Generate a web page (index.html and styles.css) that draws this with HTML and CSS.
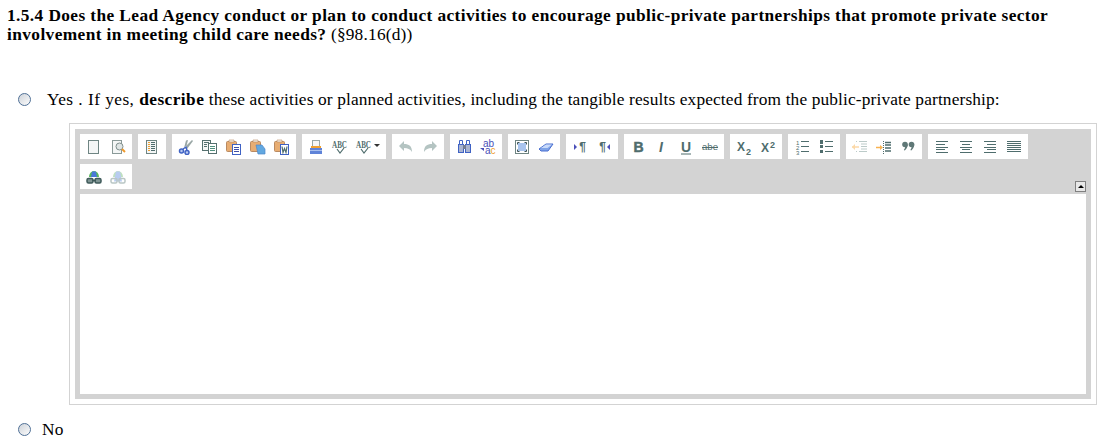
FILE: index.html
```html
<!DOCTYPE html>
<html lang="en">

<head>
    <meta charset="UTF-8">
    <meta name="viewport" content="width=device-width, initial-scale=1.0">
    <title>1.5.4</title>
    <link rel="stylesheet" href="styles.css">
</head>

<body>
    <svg class="defs" width="0" height="0">
        <symbol id="i-new" viewBox="0 0 16 16"><rect x="2.5" y="1.5" width="10" height="13" fill="#f4f6f6" stroke="#6f8583"/></symbol>
        <symbol id="i-preview" viewBox="0 0 16 16"><rect x="2.5" y="1.5" width="9" height="13" fill="#f4f6f6" stroke="#8a9a98"/><circle cx="9.5" cy="7.5" r="3.5" fill="#dfe5e5" stroke="#7f8f8d"/><path d="M12 10l3 3" stroke="#ef9a2d" stroke-width="2"/></symbol>
        <symbol id="i-templates" viewBox="0 0 16 16"><rect x="2.5" y="1.5" width="10" height="13" fill="#f4f6f6" stroke="#6f8583"/><path d="M4 3.500h2M4 5.500h2M4 7.500h2M4 9.500h2M4 11.500h2" stroke="#f0a030"/><path d="M7 3.500h4M7 5.500h4M7 7.500h4M7 9.500h4M7 11.500h4" stroke="#4f6d6d"/></symbol>
        <symbol id="i-cut" viewBox="0 0 16 16"><path d="M6 9L14 1l1 1-6 8zM8 9l2-8-2 .5L6 9z" fill="#9aa7a6"/><circle cx="3.500" cy="12" r="2" fill="#b8c8f0" stroke="#3f62c4" stroke-width="1.500"/><circle cx="9" cy="13.500" r="2" fill="#b8c8f0" stroke="#3f62c4" stroke-width="1.500"/><path d="M5 10l3-2 1 3.500" fill="none" stroke="#3f62c4" stroke-width="1.400"/></symbol>
        <symbol id="i-copy" viewBox="0 0 16 16"><rect x=".5" y="1.5" width="8" height="10" fill="#f4f6f6" stroke="#55706f"/><path d="M2 3.500h5M2 5.500h3M2 7.500h3" stroke="#55706f"/><rect x="6.500" y="4.500" width="8" height="10" fill="#fff" stroke="#55706f"/><path d="M8 7.500h5M8 9.500h5M8 11.500h5" stroke="#4f8f7d"/></symbol>
        <symbol id="i-paste" viewBox="0 0 16 16"><rect x=".5" y="2.500" width="10" height="10" rx="1" fill="#e8ad72" stroke="#b98a62"/><path d="M3 1h5v2H3z" fill="#f7efe6" stroke="#b98a62" stroke-width=".6"/><rect x="6.500" y="5.500" width="8" height="10" fill="#fff" stroke="#3f62c4"/><path d="M8 8.500h5M8 10.500h5M8 12.500h5" stroke="#3f4fa8"/></symbol>
        <symbol id="i-pastetext" viewBox="0 0 16 16"><rect x=".5" y="2.500" width="10" height="10" rx="1" fill="#e8ad72" stroke="#b98a62"/><path d="M3 1h5v2H3z" fill="#f7efe6" stroke="#b98a62" stroke-width=".6"/><path d="M6 6h6l3 4v5H8z" fill="#62a8e0" stroke="#4f86c8" stroke-width=".7"/></symbol>
        <symbol id="i-pasteword" viewBox="0 0 16 16"><rect x=".5" y="2.500" width="10" height="10" rx="1" fill="#e8ad72" stroke="#b98a62"/><path d="M3 1h5v2H3z" fill="#f7efe6" stroke="#b98a62" stroke-width=".6"/><rect x="6.500" y="5.500" width="8" height="10" fill="#fff" stroke="#3f62c4"/><path d="M8 7.500l1 6 1.500-4 1.500 4 1-6" fill="none" stroke="#4f6d6d" stroke-width="1.200"/></symbol>
        <symbol id="i-print" viewBox="0 0 16 16"><rect x="4.500" y="1.500" width="7" height="6" fill="#f6f6f6" stroke="#9aa7a6"/><rect x="3" y="7" width="10" height="2" fill="#f0a030"/><rect x="2" y="9" width="12" height="6" fill="#5f83d8"/><path d="M2 11.500h12" stroke="#a9c0ee"/></symbol>
        <symbol id="i-undo" viewBox="0 0 16 16"><path d="M1 7l5-5v3c5 0 8 2 8 8-2-3-4-4-8-4v3z" fill="#b4c4c2"/></symbol>
        <symbol id="i-redo" viewBox="0 0 16 16"><path d="M15 7l-5-5v3c-5 0-8 2-8 8 2-3 4-4 8-4v3z" fill="#b4c4c2"/></symbol>
        <symbol id="i-find" viewBox="0 0 16 16"><rect x="2.500" y="5.500" width="5" height="8" fill="#a9b4d0" stroke="#3f62c4"/><rect x="9.500" y="5.500" width="5" height="8" fill="#a9b4d0" stroke="#3f62c4"/><path d="M3.500 1.500h3v4h-3zM10.500 1.500h3v4h-3z" fill="#fff" stroke="#3f62c4"/><rect x="7" y="6" width="3" height="4" fill="#737d94"/></symbol>
        <symbol id="i-max" viewBox="0 0 16 16"><rect x="1.500" y="1.500" width="13" height="13" fill="#fff" stroke="#6f8583"/><rect x="4" y="4" width="8" height="8" fill="#a9c4ee"/><path d="M3.500 5.500v-2h2M10.500 3.500h2v2M12.500 10.500v2h-2M5.500 12.500h-2v-2" fill="none" stroke="#3f5555"/></symbol>
        <symbol id="i-erase" viewBox="0 0 16 16"><path d="M1 10l7-5h7l-5 7H3z" fill="#7fa4e8" stroke="#4a6fd0"/><path d="M8 5.500h6l-4.500 3.500H3z" fill="#c8dafa"/></symbol>
        <symbol id="i-ul" viewBox="0 0 16 16"><path d="M2 1h3v4H2zM2 6h3v3H2zM2 11h3v3H2z" fill="#4f6d6d"/><path d="M7 2.500h8M7 7.500h8M7 12.500h8" stroke="#4f6d6d"/></symbol>
        <symbol id="i-outdent" viewBox="0 0 16 16"><path d="M4 2.500h2M4 12.500h2" stroke="#bccbc9" stroke-dasharray="1 1"/><path d="M7 2.500h8M9 5h6M9 7.500h6M9 10h6M7 12.500h8" stroke="#bccbc9"/><path d="M0 8h7" stroke="#fcd9a8" stroke-width="1.500"/><path d="M3 5L0 8l3 3z" fill="#fcd9a8"/></symbol>
        <symbol id="i-indent" viewBox="0 0 16 16"><path d="M7.500 2v13" stroke="#4f6d6d" stroke-dasharray="1 1"/><path d="M9 3.500h6M9 6h6M9 9h6M9 12h6" stroke="#4f6d6d" stroke-width="1.300"/><path d="M0 8.500h5" stroke="#f8b250" stroke-width="1.500"/><path d="M4 6l3 2.500L4 11z" fill="#f8b250"/></symbol>
        <symbol id="i-quote" viewBox="0 0 16 16"><circle cx="5" cy="5.500" r="2.800" fill="#5f7877"/><path d="M7.800 5.500c0 3-2 5-3 6l-1-.5c1-1.500 1.500-2.500 1.500-4.500z" fill="#5f7877"/><circle cx="11.500" cy="5.500" r="2.800" fill="#5f7877"/><path d="M14.300 5.500c0 3-2 5-3 6l-1-.5c1-1.500 1.500-2.500 1.500-4.500z" fill="#5f7877"/></symbol>
        <symbol id="i-left" viewBox="0 0 16 16"><path d="M2 2.500h12M2 5.500h9M2 8.500h12M2 10.500h9M2 13.500h12" stroke="#4f6d6d"/></symbol>
        <symbol id="i-center" viewBox="0 0 16 16"><path d="M2 2.500h12M4 5.500h8M2 8.500h12M4 10.500h8M2 13.500h12" stroke="#4f6d6d"/></symbol>
        <symbol id="i-right" viewBox="0 0 16 16"><path d="M2 2.500h12M5 5.500h9M2 8.500h12M5 10.500h9M2 13.500h12" stroke="#4f6d6d"/></symbol>
        <symbol id="i-just" viewBox="0 0 16 16"><path d="M1 2.500h14M1 4.500h14M1 6.500h14M1 8.500h14M1 10.500h14M1 12.500h14" stroke="#4f6d6d"/></symbol>
        <symbol id="i-link" viewBox="0 0 16 16"><path d="M3 8a5 6 0 0 1 10 0z" fill="#57b85a"/><path d="M6 2.500h4l1 5.500H5z" fill="#4a78d8"/><rect x="1" y="9.500" width="6" height="4.500" rx="1.500" fill="#7f9493" stroke="#3f5a5a" stroke-width="1.500"/><rect x="9" y="9.500" width="6" height="4.500" rx="1.500" fill="#7f9493" stroke="#3f5a5a" stroke-width="1.500"/><path d="M6 11.500h4" stroke="#3f5a5a" stroke-width="1.500"/></symbol>
        <symbol id="i-unlink" viewBox="0 0 16 16"><path d="M3 8a5 6 0 0 1 10 0z" fill="#bfe0c0"/><path d="M6 2.500h4l2 10H4z" fill="#b8ccf0"/><rect x="1" y="9.500" width="6" height="4.500" rx="1.500" fill="none" stroke="#b9c6c5" stroke-width="1.500"/><rect x="9" y="9.500" width="6" height="4.500" rx="1.500" fill="none" stroke="#b9c6c5" stroke-width="1.500"/></symbol>
    </svg>

    <p class="question"><b>1.5.4 Does the Lead Agency conduct or plan to conduct activities to encourage public-private partnerships that promote private sector involvement in meeting child care needs?</b> (§98.16(d))</p>

    <label class="opt opt-yes">
        <input type="radio" name="q154">
        <span><span class="lead">Yes . If yes, <b>describe</b></span> these activities or planned activities, including the tangible results expected from the public-private partnership:</span>
    </label>

    <div class="editor">
        <div class="toolbar">
            <div class="row">
                <div class="group"><a class="btn"><svg><use href="#i-new"/></svg></a><a class="btn"><svg><use href="#i-preview"/></svg></a></div>
                <div class="group"><a class="btn"><svg><use href="#i-templates"/></svg></a></div>
                <div class="group"><a class="btn"><svg><use href="#i-cut"/></svg></a><a class="btn"><svg><use href="#i-copy"/></svg></a><a class="btn"><svg><use href="#i-paste"/></svg></a><a class="btn"><svg><use href="#i-pastetext"/></svg></a><a class="btn"><svg><use href="#i-pasteword"/></svg></a></div>
                <div class="group">
                    <a class="btn"><svg><use href="#i-print"/></svg></a>
                    <a class="btn"><svg viewBox="0 0 16 16"><text x="0" y="9" class="abc" textLength="15" lengthAdjust="spacingAndGlyphs">ABC</text><path d="M5 10l3 4 4-5" fill="none" stroke="#4f6d6d" stroke-width="1.200"/></svg></a>
                    <a class="btn btn-menu"><svg viewBox="0 0 16 16"><text x="0" y="9" class="abc" textLength="15" lengthAdjust="spacingAndGlyphs">ABC</text><path d="M5 10l3 4 4-5" fill="none" stroke="#4f6d6d" stroke-width="1.200"/></svg><i class="caret"></i></a>
                </div>
                <div class="group"><a class="btn"><svg><use href="#i-undo"/></svg></a><a class="btn"><svg><use href="#i-redo"/></svg></a></div>
                <div class="group">
                    <a class="btn"><svg><use href="#i-find"/></svg></a>
                    <a class="btn"><svg viewBox="0 0 16 16"><text x="3" y="7.500" class="rep">ab</text><text x="5" y="14.500" class="rep">a<tspan class="rep-c">c</tspan></text><path d="M0 9h4v3z" fill="#4a4fb8"/></svg></a>
                </div>
                <div class="group"><a class="btn"><svg><use href="#i-max"/></svg></a><a class="btn"><svg><use href="#i-erase"/></svg></a></div>
                <div class="group">
                    <a class="btn"><svg viewBox="0 0 16 16"><path d="M2 5l3 3-3 3z" fill="#4a4fb8"/><text x="14" y="12" class="para">¶</text></svg></a>
                    <a class="btn"><svg viewBox="0 0 16 16"><text x="10" y="12" class="para">¶</text><path d="M14 5l-3 3 3 3z" fill="#4a4fb8"/></svg></a>
                </div>
                <div class="group">
                    <a class="btn"><svg viewBox="0 0 16 16"><text x="8.500" y="13" class="fmt b heavy">B</text></svg></a>
                    <a class="btn"><svg viewBox="0 0 16 16"><text x="7" y="13" class="fmt it">I</text></svg></a>
                    <a class="btn"><svg viewBox="0 0 16 16"><text x="8" y="13" class="fmt b">U</text><path d="M3 15h10" stroke="#4f6d6d"/></svg></a>
                    <a class="btn"><svg viewBox="0 0 16 16"><text x="0" y="11" class="strike" textLength="16" lengthAdjust="spacingAndGlyphs">abe</text><path d="M0 8.500h16" stroke="#4f6d6d"/></svg></a>
                </div>
                <div class="group">
                    <a class="btn"><svg viewBox="0 0 16 16"><text x="1" y="12" class="sx">X</text><text x="10" y="16" class="ss">2</text></svg></a>
                    <a class="btn"><svg viewBox="0 0 16 16"><text x="1" y="13" class="sx">X</text><text x="10" y="9" class="ss">2</text></svg></a>
                </div>
                <div class="group">
                    <a class="btn"><svg viewBox="0 0 16 16"><text x="2" y="6" class="num">1</text><text x="2" y="11" class="num">2</text><text x="2" y="16" class="num">3</text><path d="M7 2.500h8M7 7.500h8M7 12.500h8" stroke="#4f6d6d"/></svg></a>
                    <a class="btn"><svg><use href="#i-ul"/></svg></a>
                </div>
                <div class="group"><a class="btn"><svg><use href="#i-outdent"/></svg></a><a class="btn"><svg><use href="#i-indent"/></svg></a><a class="btn"><svg><use href="#i-quote"/></svg></a></div>
                <div class="group"><a class="btn"><svg><use href="#i-left"/></svg></a><a class="btn"><svg><use href="#i-center"/></svg></a><a class="btn"><svg><use href="#i-right"/></svg></a><a class="btn"><svg><use href="#i-just"/></svg></a></div>
            </div>
            <div class="row">
                <div class="group"><a class="btn"><svg><use href="#i-link"/></svg></a><a class="btn"><svg><use href="#i-unlink"/></svg></a></div>
            </div>
            <a class="collapse"><i></i></a>
        </div>
        <div class="area"></div>
    </div>

    <label class="opt opt-no">
        <input type="radio" name="q154">
        <span>No</span>
    </label>
</body>

</html>
```

FILE: styles.css
```css
body {
    margin: 0;
    padding: 6px 0 0 7px;
    font-family: "Liberation Serif", "Times New Roman", serif;
    font-size: 17.33px;
    line-height: 19px;
    color: #000;
    background-color: #fff;
    overflow: hidden;
}

.defs {
    position: absolute;
}

.question {
    margin: 0;
    width: 1060px;
    letter-spacing: 0.2px;
}

.question b {
    letter-spacing: 0.4px;
}

.opt {
    display: flex;
    align-items: center;
    letter-spacing: 0.14px;
}

.lead {
    letter-spacing: 0.45px;
}

.opt input {
    appearance: none;
    flex: none;
    width: 13px;
    height: 13px;
    margin: 0;
    border: 1px solid #4f7096;
    border-radius: 50%;
    background: linear-gradient(135deg, #cfd4da, #fbfbfb);
}

.opt-yes {
    margin: 46px 0 0 11px;
    gap: 16px;
}

.opt-no {
    margin: 15px 0 0 11px;
    gap: 11px;
}

.editor {
    width: 1016px;
    margin: 14px 0 0 62px;
    padding: 5px;
    border: 1px solid #d3d3d3;
}

.toolbar {
    position: relative;
    display: flex;
    flex-direction: column;
    gap: 5px;
    padding: 5px;
    background-color: #d3d3d3;
}

.row {
    display: flex;
    gap: 6px;
}

.group {
    display: flex;
    padding: 0 2px;
    background-color: #fff;
}

.btn {
    display: flex;
    width: 24px;
    height: 25px;
    padding: 5px 4px 4px;
    box-sizing: border-box;
}

.btn svg {
    width: 16px;
    height: 16px;
    flex: none;
    overflow: visible;
}

.btn-menu {
    width: 32px;
    gap: 2px;
}

.caret {
    width: 0;
    height: 0;
    margin-top: 5px;
    border: 3px solid transparent;
    border-top-color: #333;
}

.collapse {
    position: absolute;
    right: 5px;
    bottom: 2px;
    display: flex;
    align-items: center;
    justify-content: center;
    width: 9px;
    height: 9px;
    border: 1px solid #808080;
    background-color: #e8e8e8;
}

.collapse i {
    width: 0;
    height: 0;
    border: 3px solid transparent;
    border-bottom-color: #000;
    border-top: 0;
}

.area {
    height: 200px;
    background-color: #fff;
    border: 5px solid #d3d3d3;
    border-top: 0;
}

.btn text {
    font-family: "Liberation Sans", Arial, sans-serif;
    letter-spacing: 0;
    fill: #4f6d6d;
}

.btn .abc {
    font-family: "Liberation Serif", serif;
    font-size: 10px;
    font-weight: bold;
}

.btn .rep {
    font-size: 10px;
    fill: #4a4fb8;
}

.btn .rep-c {
    fill: #f0a030;
}

.btn .para {
    font-size: 12px;
    font-weight: bold;
    text-anchor: end;
}

.btn .fmt {
    font-size: 14px;
    text-anchor: middle;
}

.btn .b {
    font-weight: bold;
}

.btn .heavy {
    stroke: #4f6d6d;
    stroke-width: 0.5px;
}

.btn .it {
    font-style: italic;
    font-weight: bold;
}

.btn .strike {
    font-size: 9px;
}

.btn .sx {
    font-size: 12px;
    font-weight: bold;
}

.btn .ss {
    font-size: 9px;
    font-weight: bold;
}

.btn .num {
    font-size: 6px;
}
```
